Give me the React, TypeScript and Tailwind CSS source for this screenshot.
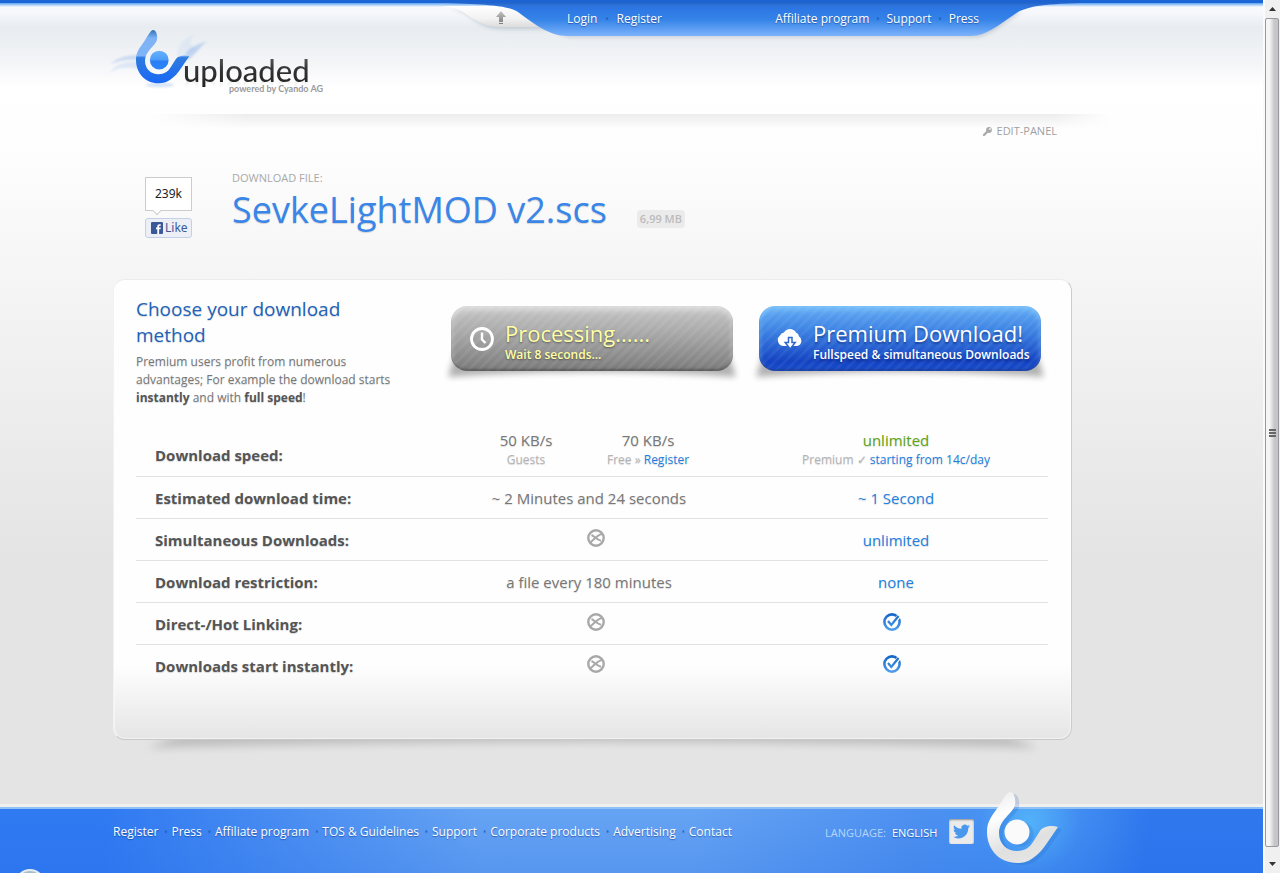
import { ReactNode } from "react";

const shade = "[text-shadow:0_1px_1px_rgba(0,0,0,0.15)]";
const navShade = "[text-shadow:0_1px_1px_rgba(0,40,120,0.5)]";

const footerLinks = [
  "Register",
  "Press",
  "Affiliate program",
  "TOS & Guidelines",
  "Support",
  "Corporate products",
  "Advertising",
  "Contact",
];

const MARK =
  "M23 0C27 0 29 7 28 13C26 21 12 28 12 41C12 52 20 59 30 59C38 59 43 55 46 50L53 39C56 34 65 33 71 35L60 51C56 57 52 62 46 66C41 70 36 71 30 71C12 71 0 57 0 40C0 30 4 25 9 18C15 10 19 0 23 0Z";

function Dot() {
  return <span className="text-[#1b5fc0]">·</span>;
}

function Logo() {
  return (
    <a href="#" className="flex w-fit pt-6">
      <svg width="110" height="72" viewBox="0 0 110 72" className="shrink-0">
        <defs>
          <linearGradient id="mark" x1="0" y1="0" x2="0" y2="1">
            <stop offset="0" stopColor="#2f72b8" />
            <stop offset="0.15" stopColor="#7db2f5" />
            <stop offset="0.48" stopColor="#7fb4f8" />
            <stop offset="0.52" stopColor="#2f7be0" />
            <stop offset="1" stopColor="#1868f5" />
          </linearGradient>
          <linearGradient id="ball" x1="0" y1="0" x2="0" y2="1">
            <stop offset="0" stopColor="#66b2ff" />
            <stop offset="0.5" stopColor="#4a9cfa" />
            <stop offset="0.55" stopColor="#2b7ef5" />
            <stop offset="1" stopColor="#2a84ff" />
          </linearGradient>
          <filter id="mist" x="-10%" y="-10%" width="120%" height="120%">
            <feGaussianBlur stdDeviation="1" />
          </filter>
        </defs>
        <g fill="#7fa9e8" filter="url(#mist)">
          <path d="M34 31C20 31 10 35 6 40C14 36 24 35 34 36Z" opacity="0.35" />
          <path d="M34 38C20 37 9 41 4 50C11 43 22 43 34 45Z" opacity="0.2" />
          <path d="M80 31C84 23 93 20 103 17C95 22 91 30 83 36Z" opacity="0.4" />
          <path d="M72 32C72 20 80 14 90 10C84 15 84 22 92 26C84 28 78 32 76 36Z" opacity="0.12" />
          <ellipse cx="55" cy="61" rx="14" ry="2.5" opacity="0.3" />
        </g>
        <g transform="translate(31 6) scale(0.75)">
          <path d={MARK} fill="url(#mark)" />
          <circle cx="31" cy="40" r="12.5" fill="url(#ball)" />
        </g>
      </svg>
      <span className="-ml-8 flex flex-col pt-7 font-['Lato',sans-serif]">
        <span className="bg-gradient-to-b from-[#666] via-[#333] to-[#222] bg-clip-text text-[31px] leading-9 font-medium text-transparent [-webkit-box-reflect:below_-14px_linear-gradient(transparent_60%,rgba(0,0,0,0.12))]">
          uploaded
        </span>
        <span className="-mt-[5px] pl-[46px] text-[9px] leading-3 font-bold text-[#9a9a9a]">
          powered by Cyando AG
        </span>
      </span>
    </a>
  );
}

function TopTab() {
  return (
    <svg
      width="640"
      height="46"
      viewBox="0 0 640 46"
      className="absolute top-0 left-0"
    >
      <defs>
        <linearGradient id="tab" x1="0" y1="0" x2="0" y2="36" gradientUnits="userSpaceOnUse">
          <stop offset="0" stopColor="#1b62d4" />
          <stop offset="0.07" stopColor="#1f63cd" />
          <stop offset="0.16" stopColor="#3173d6" />
          <stop offset="0.22" stopColor="#2c76e4" />
          <stop offset="0.55" stopColor="#3584e8" />
          <stop offset="1" stopColor="#7db2fb" />
        </linearGradient>
        <linearGradient id="curl" x1="0" y1="0" x2="0" y2="1">
          <stop offset="0" stopColor="#ffffff" />
          <stop offset="0.6" stopColor="#f2f2f2" />
          <stop offset="1" stopColor="#dcdcdc" />
        </linearGradient>
        <linearGradient id="up" x1="0" y1="0" x2="0" y2="1">
          <stop offset="0" stopColor="#c4c4c4" />
          <stop offset="1" stopColor="#7c7c7c" />
        </linearGradient>
        <filter id="soft" x="-10%" y="-20%" width="120%" height="160%">
          <feGaussianBlur stdDeviation="2" />
        </filter>
      </defs>
      <path d="M10 8C30 10 36 29 62 29H110L128 37H534C550 37 566 20 582 12" fill="#8f9fb0" opacity="0.45" filter="url(#soft)" />
      <path d="M0 6C30 7 30 27 62 27H104L80 6Z" fill="url(#curl)" />
      <path
        d="M0 0H640V3C600 4 588 7 578 12C562 22 548 36 530 36H128C108 36 92 22 78 12C68 6 50 4 0 3Z"
        fill="url(#tab)"
      />
      <path d="M61 11L66 17H63V22H59V17H56ZM59 23H63V24H59Z" fill="url(#up)" />
    </svg>
  );
}

function CrossIcon() {
  return (
    <svg width="18" height="18" viewBox="0 0 18 18" fill="none" stroke="#a8a8a8" role="img" aria-label="no">
      <circle cx="9" cy="9" r="7.7" strokeWidth="2.4" />
      <path d="M3.5 13.5C6 11 11 5.5 15 5M4.5 6C7.5 7.5 10 11 14 11.8" strokeWidth="2" />
    </svg>
  );
}

function CheckIcon() {
  return (
    <svg width="18" height="18" viewBox="0 0 18 18" fill="none" role="img" aria-label="yes">
      <defs>
        <linearGradient id="ring" x1="0" y1="0" x2="0" y2="18" gradientUnits="userSpaceOnUse">
          <stop offset="0" stopColor="#1063c4" />
          <stop offset="1" stopColor="#55a0ee" />
        </linearGradient>
      </defs>
      <circle cx="9" cy="9" r="7.6" stroke="url(#ring)" strokeWidth="2.6" />
      <path d="M5 8.5L8.3 12.5L16 3" stroke="#fff" strokeWidth="4" />
      <path d="M5 8L8.3 12L15.5 3" stroke="url(#ring)" strokeWidth="2.2" />
    </svg>
  );
}

const cross = (
  <span className="flex justify-center pb-1 pl-3.5">
    <CrossIcon />
  </span>
);

const check = (
  <span className="flex justify-center pr-2 pb-1">
    <CheckIcon />
  </span>
);

function BigButton(props: {
  tone: string;
  text: string;
  title: string;
  note: string;
  icon: ReactNode;
}) {
  return (
    <div className="relative isolate w-[282px] shrink-0">
      <svg
        width="300"
        height="40"
        viewBox="0 0 300 40"
        className="absolute -bottom-4 -left-[9px] -z-10"
      >
        <defs>
          <filter id="lift" x="-10%" y="-50%" width="120%" height="200%">
            <feGaussianBlur stdDeviation="3" />
          </filter>
        </defs>
        <path d="M14 4H286L294 30Q150 20 6 30Z" fill="#000" opacity="0.3" filter="url(#lift)" />
      </svg>
      <button
        className={`flex h-[65px] w-full items-center rounded-2xl pl-[18px] text-left ${props.tone}`}
      >
        <span className="w-9 shrink-0">{props.icon}</span>
        <span className={`flex flex-col pt-1 whitespace-nowrap ${props.text}`}>
          <span className="text-[22px] leading-[28px]">{props.title}</span>
          <span className="text-[12px] leading-4 font-semibold">{props.note}</span>
        </span>
      </button>
    </div>
  );
}

function Row(props: { label: string; free: ReactNode; premium: ReactNode; last?: boolean }) {
  return (
    <tr className={props.last ? "" : "border-b border-[#e2e2e2]"}>
      <th
        scope="row"
        className="h-[42px] w-[298px] pt-0.5 pl-[19px] text-left font-bold text-[#555]"
      >
        {props.label}
      </th>
      <td className="w-[310px] pt-0.5 text-center">{props.free}</td>
      <td className="pt-0.5 text-center text-[#2180e0]">{props.premium}</td>
    </tr>
  );
}

function Footer() {
  return (
    <footer className="relative h-[69px] border-t-3 border-[#f0f0f0] bg-[#2d76ee] font-medium text-white">
      <div className="h-full border-t-2 border-[#8fc0f6] bg-[linear-gradient(rgba(40,110,240,0),rgba(30,100,225,0.2)),radial-gradient(circle_at_1030px_15px,#55b5fa_0,rgba(75,155,245,0.5)_50px,transparent_120px),linear-gradient(90deg,#307af2_8%,#65a3f3_38%,#65a3f3_55%,#4a8ef0_75%,#2f78ee_90%)]">
        <div className="mx-auto flex max-w-[1037px] items-start">
          <nav className={`flex w-[619px] shrink-0 justify-between pt-[15px] text-[12px] leading-4 whitespace-nowrap ${navShade}`}>
            {footerLinks.map((l, i) => (
              <span key={l} className="flex gap-1">
                {i > 0 && <Dot />}
                <a href="#">{l}</a>
              </span>
            ))}
          </nav>
          <div className="ml-[93px] flex shrink-0 gap-1.5 pt-4 text-[11px] leading-4">
            <span className="font-normal text-[#b5d6fb]">LANGUAGE:</span>
            <a href="#" className={navShade}>ENGLISH</a>
          </div>
          <a
            href="#"
            aria-label="Twitter"
            className="mt-2.5 ml-auto flex h-[25px] w-[25px] shrink-0 items-center justify-center rounded-xs bg-[#ebebeb] shadow-[inset_0_1px_2px_rgba(0,0,0,0.4)]"
          >
            <svg width="17" height="17" viewBox="0 0 24 24" fill="#4a98ee">
              <path d="M23.95 4.57a10 10 0 0 1-2.82.77 4.96 4.96 0 0 0 2.16-2.72c-.95.55-2 .96-3.13 1.18a4.92 4.92 0 0 0-8.38 4.48C7.69 8.1 4.07 6.13 1.64 3.16a4.82 4.82 0 0 0-.67 2.48c0 1.71.87 3.21 2.19 4.1a4.9 4.9 0 0 1-2.23-.62v.06a4.92 4.92 0 0 0 3.95 4.83 5 5 0 0 1-2.21.08 4.94 4.94 0 0 0 4.6 3.42A9.87 9.87 0 0 1 0 19.54a13.99 13.99 0 0 0 7.56 2.21c9.05 0 14-7.5 14-13.98 0-.21 0-.42-.02-.63a9.94 9.94 0 0 0 2.46-2.55z" />
            </svg>
          </a>
          <svg
            width="100"
            height="86"
            viewBox="0 0 100 86"
            className="-mt-[23px] mr-[72px] ml-1 shrink-0"
          >
            <defs>
              <linearGradient id="white" x1="0" y1="0" x2="0.4" y2="1">
                <stop offset="0" stopColor="#e8e8e8" />
                <stop offset="0.35" stopColor="#fff" />
                <stop offset="0.8" stopColor="#e0e0e0" />
                <stop offset="1" stopColor="#e4e4e4" />
              </linearGradient>
            </defs>
            <g transform="translate(9 6)">
              <g transform="translate(4 2)" fill="#1a5ab8" opacity="0.18">
                <path d={MARK} />
                <circle cx="30" cy="40" r="12.5" />
              </g>
              <path d={MARK} fill="url(#white)" />
              <circle cx="30" cy="40" r="12.5" fill="#fafafa" />
            </g>
          </svg>
        </div>
      </div>
      <div className="absolute bottom-0 left-[15px] h-1 w-[30px] overflow-hidden">
        <div className="h-[30px] w-[30px] rounded-full border-2 border-[#e4ecf2] bg-[#a9bccb]" />
      </div>
    </footer>
  );
}

function Scrollbar() {
  return (
    <div aria-hidden="true" className="flex w-[17px] shrink-0 flex-col border-l-2 border-[#fafafa] bg-[#f0f0f0]">
      <div className="flex h-[18px] items-center justify-center">
        <svg width="7" height="4"><path d="M0 4L3.5 0L7 4Z" fill="#333" /></svg>
      </div>
      <div className="mr-px flex flex-1 flex-col items-center justify-center gap-px rounded-xs border border-[#999] bg-gradient-to-r from-[#f5f5f5] from-30% to-[#c6c6ca] to-70%">
        <i className="h-0.5 w-[7px] bg-[#666]" />
        <i className="h-0.5 w-[7px] bg-[#666]" />
        <i className="h-0.5 w-[7px] bg-[#666]" />
      </div>
      <div className="flex h-[26px] items-center justify-center pt-2">
        <svg width="7" height="4"><path d="M0 0L3.5 4L7 0Z" fill="#333" /></svg>
      </div>
    </div>
  );
}

export default function App() {
  return (
    <div className="flex min-h-screen font-['Open_Sans','Trebuchet_MS',sans-serif]">
      <div className="flex min-w-0 flex-1 flex-col bg-[linear-gradient(#1b66d6_0,#1b66d6_3px,#5fa4f0_3px,#a9cff8_5px,#d5e6f8_6px,#f8f9fc_7px,#f5f7fa_14px,#e8ecf0_27px,#edf0f3_45px,#f3f4f7_60px,#ffffff_88px,#fdfdfd_160px,#f5f5f5_280px,#e4e4e4_560px)]">
        <header className="mx-auto h-[114px] w-full max-w-[1037px]">
          <div className="relative ml-[327px] h-0 w-[640px]">
            <TopTab />
            <nav className={`relative ml-[127px] flex w-[412px] justify-between pt-[11px] text-[12px] leading-4 font-medium text-white ${navShade}`}>
              <span className="flex gap-2">
                <a href="#">Login</a>
                <Dot />
                <a href="#">Register</a>
              </span>
              <span className="flex gap-[7px]">
                <a href="#">Affiliate program</a>
                <Dot />
                <a href="#">Support</a>
                <Dot />
                <a href="#">Press</a>
              </span>
            </nav>
          </div>
          <div className="-ml-2">
            <Logo />
          </div>
        </header>

        <main className="mx-auto w-full max-w-[1037px] flex-1">
          <div className="ml-[39px] h-3.5 max-w-[958px] bg-[linear-gradient(90deg,#fefefe,transparent_10%,transparent_94%,#fefefe),linear-gradient(#ececec,#fdfdfd)]" />
          <div className="-mt-[5px] flex max-w-[944px] items-center justify-end gap-1 text-[11px] leading-4 text-[#a0a0a0]">
            <svg width="11" height="11" viewBox="0 0 11 11">
              <path d="M2 9L6 5" stroke="#aaa" strokeWidth="2.4" strokeLinecap="round" />
              <circle cx="7" cy="4" r="2.9" fill="#aaa" />
              <circle cx="8" cy="3" r="1" fill="#eee" />
            </svg>
            <a href="#">EDIT-PANEL</a>
          </div>

          <section className="mt-[31px] flex items-start pl-8">
            <div className="mt-[7px] w-[47px] font-['Noto_Sans',sans-serif] text-[12px] leading-4">
              <div className="relative border border-[#ccc] bg-white py-2 text-center text-[#222]">
                239k
                <span className="absolute -bottom-1 left-2 h-1.5 w-1.5 rotate-45 border-r border-b border-[#ccc] bg-white" />
              </div>
              <button className="mt-[7px] flex h-5 w-full items-center gap-0.5 rounded-[3px] border border-[#c5d0e6] bg-[#eceff6] pl-[5px] text-[#3b5998]">
                <svg width="12" height="12" viewBox="0 0 12 12" className="shrink-0">
                  <rect width="12" height="12" rx="1" fill="#3b5998" />
                  <path d="M6.3 12V7.2H5V5.5H6.3V4.4C6.3 3 7.1 2.2 8.5 2.2H9.8V3.8H9C8.4 3.8 8.1 4.1 8.1 4.6V5.5H9.8L9.5 7.2H8.1V12Z" fill="#fff" />
                </svg>
                Like
              </button>
            </div>
            <div className="ml-10">
              <p className="text-[11px] leading-4 text-[#a8a8a8]">DOWNLOAD FILE:</p>
              <div className="flex items-center gap-[30px] whitespace-nowrap">
                <h1 className={`text-[36px] leading-[48px] text-[#3a86e8] ${shade}`}>
                  SevkeLightMOD v2.scs
                </h1>
                <span className="mt-[18px] rounded bg-[#ebebeb] px-[3px] text-[11px] leading-[18px] font-semibold text-[#bbb]">
                  6,99 MB
                </span>
              </div>
            </div>
          </section>

          <section className="relative isolate mt-[41px] max-w-[959px]">
            <svg
              viewBox="0 0 959 48"
              preserveAspectRatio="none"
              className="absolute -bottom-6 left-0 -z-10 h-12 w-full"
            >
              <defs>
                <filter id="cardShadow" x="-5%" y="-50%" width="110%" height="200%">
                  <feGaussianBlur stdDeviation="4" />
                </filter>
              </defs>
              <path d="M90 8H869L925 32Q480 20 34 32Z" fill="#000" opacity="0.16" filter="url(#cardShadow)" />
            </svg>
            <div className="h-[461px] rounded-xl border border-t-[#ececec] border-r-[#ccc] border-b-[#c8c8c8] border-l-[#f2f2f2] bg-[linear-gradient(#fefefe_84%,#e5e5e5)] pt-4 pr-[23px] pl-[22px] shadow-[inset_0_0_1px_1px_rgba(255,255,255,0.5)]">
              <div className="flex h-[131px] items-start">
                <div className="w-[315px] shrink-0">
                  <h2 className={`w-[250px] text-[19px] leading-[26px] font-medium text-[#2262b8] ${shade}`}>
                    Choose your download method
                  </h2>
                  <p className={`mt-[5px] w-[265px] text-[12px] leading-[18px] text-[#777] ${shade}`}>
                    Premium users profit from numerous advantages; For example the download starts{" "}
                    <b className="text-[#555]">instantly</b> and with{" "}
                    <b className="text-[#555]">full speed</b>!
                  </p>
                </div>
                <div className="mt-2.5 flex gap-[26px]">
                  <BigButton
                    tone="bg-[repeating-linear-gradient(135deg,rgba(255,255,255,0.06)_0_3px,transparent_3px_7px),linear-gradient(#c6c6c6,#a6a6a6_45%,#828282_90%,#747474)] shadow-[inset_0_4px_6px_rgba(255,255,255,0.45),inset_0_-2px_2px_rgba(0,0,0,0.25)]"
                    text="text-[#ffffa5] [text-shadow:0_1px_2px_rgba(0,0,0,0.45)]"
                    title="Processing......"
                    note="Wait 8 seconds..."
                    icon={
                      <svg width="26" height="26" viewBox="0 0 26 26" fill="none" stroke="#fff">
                        <circle cx="13" cy="13" r="10.5" strokeWidth="2.8" />
                        <path d="M13 6.5V13.5L16.5 17" strokeWidth="2.4" />
                      </svg>
                    }
                  />
                  <BigButton
                    tone="bg-[repeating-linear-gradient(135deg,rgba(255,255,255,0.05)_0_3px,transparent_3px_7px),linear-gradient(#64adf5,#3b80e2_40%,#1443c2_85%,#184dcc)] shadow-[inset_0_3px_6px_rgba(150,215,255,0.6),inset_0_-2px_2px_rgba(0,0,60,0.3)]"
                    text="text-white [text-shadow:0_2px_2px_rgba(0,20,90,0.5)]"
                    title="Premium Download!"
                    note="Fullspeed & simultaneous Downloads"
                    icon={
                      <svg width="26" height="22" viewBox="0 0 26 22">
                        <path d="M6 18A6 6 0 0 1 3 7.5A5 5 0 0 1 7 4.5A7 7 0 0 1 19 4.5A4.5 4.5 0 0 1 22 8.5A5.2 5.2 0 0 1 20 18Z" fill="#fff" />
                        <path d="M11.5 9.5H15V14.5H18.2L13.2 21L8.2 14.5H11.5Z" fill="#fff" stroke="#2e66d0" strokeWidth="1.5" />
                      </svg>
                    }
                  />
                </div>
              </div>

              <table className={`w-full table-fixed border-collapse text-[15px] leading-5 text-[#777] ${shade}`}>
                <tbody>
                  <tr className="border-b border-[#e2e2e2]">
                    <th
                      scope="row"
                      className="h-[49px] w-[298px] pt-2 pl-[19px] text-left font-bold text-[#555]"
                    >
                      Download speed:
                    </th>
                    <td className="w-[310px] pr-1 pb-0.5">
                      <div className="flex justify-center text-center">
                        <div className="w-[122px]">
                          50 KB/s
                          <p className="text-[12px] leading-5 text-[#b4b4b4]">Guests</p>
                        </div>
                        <div className="w-[122px]">
                          70 KB/s
                          <p className="text-[12px] leading-5 text-[#b4b4b4]">
                            Free » <a href="#" className="text-[#2180e0]">Register</a>
                          </p>
                        </div>
                      </div>
                    </td>
                    <td className="pb-0.5 text-center text-[#5ba516]">
                      unlimited
                      <p className="text-[12px] leading-5 text-[#b4b4b4]">
                        Premium ✓ <a href="#" className="text-[#2180e0]">starting from 14c/day</a>
                      </p>
                    </td>
                  </tr>
                  <Row label="Estimated download time:" free="~ 2 Minutes and 24 seconds" premium="~ 1 Second" />
                  <Row label="Simultaneous Downloads:" free={cross} premium="unlimited" />
                  <Row label="Download restriction:" free="a file every 180 minutes" premium="none" />
                  <Row label="Direct-/Hot Linking:" free={cross} premium={check} />
                  <Row label="Downloads start instantly:" free={cross} premium={check} last />
                </tbody>
              </table>
            </div>
          </section>
        </main>

        <Footer />
      </div>
      <Scrollbar />
    </div>
  );
}
